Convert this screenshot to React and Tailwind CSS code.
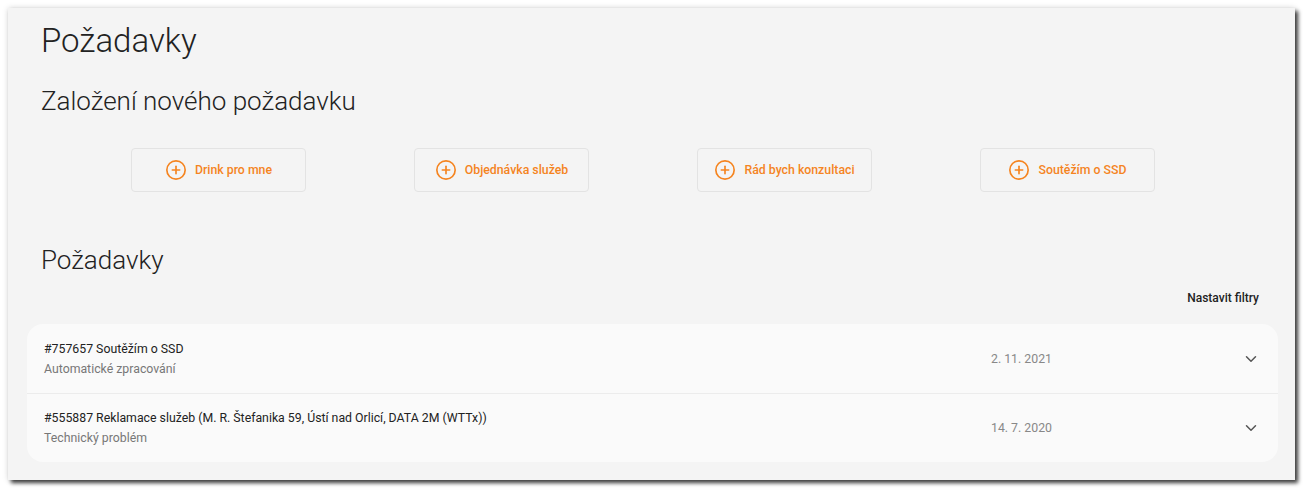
import React from 'react';
import { CirclePlus, ChevronDown } from 'lucide-react';

const actions = ['Drink pro mne', 'Objednávka služeb', 'Rád bych konzultaci', 'Soutěžím o SSD'];

const requests = [
  { id: '#757657', title: 'Soutěžím o SSD', type: 'Automatické zpracování', date: '2. 11. 2021' },
  {
    id: '#555887',
    title: 'Reklamace služeb (M. R. Štefanika 59, Ústí nad Orlicí, DATA 2M (WTTx))',
    type: 'Technický problém',
    date: '14. 7. 2020',
  },
];

const App = () => {
  return (
    <div className="bg-white p-2 font-['Roboto','Liberation_Sans',sans-serif]">
      <div className="bg-[#f4f4f4] pl-[19px] pr-[17px] pt-[13px] pb-[18px] shadow-[3px_3px_4px_rgba(0,0,0,0.75),0_0_6px_rgba(0,0,0,0.15)]">
        <h1 className="ml-[14px] text-[33px] leading-[40px] font-light text-[#222]">Požadavky</h1>

        <h2 className="ml-[14px] mt-[23px] text-[26px] leading-[34px] font-light text-[#222]">
          Založení nového požadavku
        </h2>

        <div className="mt-[30px] ml-[104px] flex gap-[108px]">
          {actions.map(label => (
            <button
              key={label}
              className="flex h-[44px] w-[175px] items-center justify-center gap-[8px] rounded-[4px] border border-[#e3e3e3] bg-[#f4f4f4] text-[12.3px] font-medium text-[#f5841f]"
            >
              <CirclePlus size={22} strokeWidth={1.8} />
              <span>{label}</span>
            </button>
          ))}
        </div>

        <h2 className="ml-[14px] mt-[51px] text-[26px] leading-[34px] font-light text-[#222]">Požadavky</h2>

        <div className="mt-[13px] mr-[19px] flex justify-end">
          <span className="text-[12px] leading-[16px] font-medium text-[#222]">Nastavit filtry</span>
        </div>

        <div className="mt-[18px] rounded-[16px] bg-[#fafafa]">
          {requests.map((r, i) => (
            <div
              key={r.id}
              className={`flex items-center pl-[17px] pr-[18px] ${
                i > 0 ? 'border-t border-[#ececec] pt-[14px] pb-[14px]' : 'pt-[15px] pb-[14px]'
              }`}
            >
              <div className="flex-1 text-[12.3px] leading-[20px]">
                <div className="text-[#222]">
                  {r.id} {r.title}
                </div>
                <div className="text-[#777]">{r.type}</div>
              </div>
              <div className="w-[251px] text-[12.3px] text-[#888]">{r.date}</div>
              <ChevronDown size={18} strokeWidth={2} className="text-[#555]" />
            </div>
          ))}
        </div>
      </div>
    </div>
  );
};

export default App;
